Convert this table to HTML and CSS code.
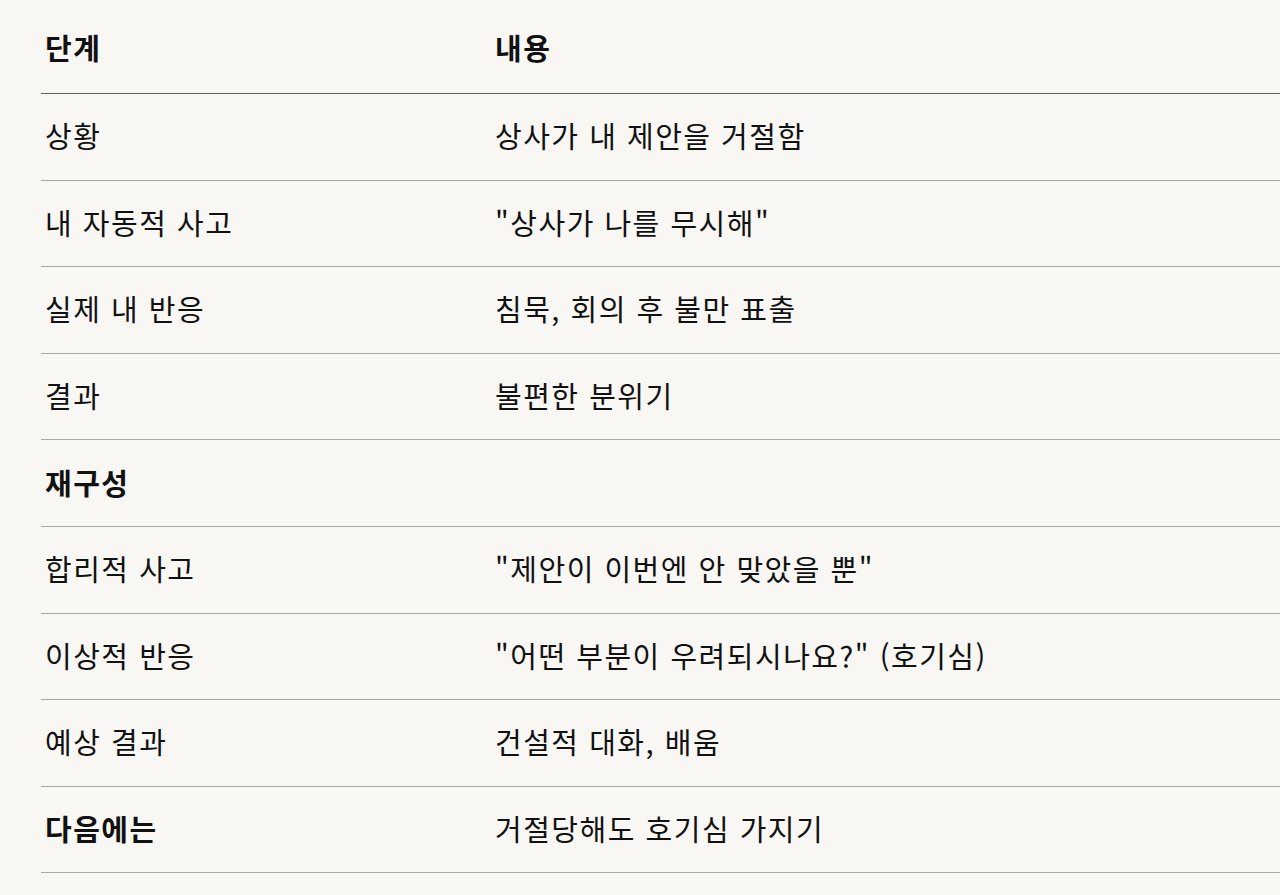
FILE: index.html
```html
<!DOCTYPE html>
<html lang="ko">
<head>
<meta charset="utf-8">
<link rel="stylesheet" href="styles.css">
</head>
<body>
<div class="topband"></div>
<table class="steps">
  <thead>
    <tr><th class="c1">단계</th><th class="c2">내용</th></tr>
  </thead>
  <tbody>
    <tr><td>상황</td><td>상사가 내 제안을 거절함</td></tr>
    <tr><td>내 자동적 사고</td><td>"상사가 나를 무시해"</td></tr>
    <tr><td>실제 내 반응</td><td>침묵, 회의 후 불만 표출</td></tr>
    <tr><td>결과</td><td>불편한 분위기</td></tr>
    <tr><td class="b">재구성</td><td></td></tr>
    <tr><td>합리적 사고</td><td>"제안이 이번엔 안 맞았을 뿐"</td></tr>
    <tr><td>이상적 반응</td><td>"어떤 부분이 우려되시나요?" (호기심)</td></tr>
    <tr><td>예상 결과</td><td>건설적 대화, 배움</td></tr>
    <tr><td class="b">다음에는</td><td>거절당해도 호기심 가지기</td></tr>
  </tbody>
</table>
</body>
</html>
```
FILE: styles.css
```css
html, body {
  margin: 0;
  padding: 0;
  background: #f8f7f3;
}
body {
  font-family: "Noto Sans CJK KR", sans-serif;
  color: #111111;
  overflow: hidden;
}
.topband {
  height: 4px;
  background: #faf9f6;
}
.steps {
  margin-left: 41px;
  width: 1260px;
  border-collapse: collapse;
  font-size: 29px;
  letter-spacing: 1.5px;
}
.steps th, .steps td {
  text-align: left;
  padding: 0 4px 3px 4px;
  height: 82.6px;
  vertical-align: middle;
  border-bottom: 1px solid #a8a8a6;
  font-weight: 400;
}
.steps th {
  font-weight: 700;
  border-bottom: 1.5px solid #5f5f5f;
  height: 86px;
}
.steps .c1 { width: 442px; }
.steps td.b { font-weight: 700; }
```
